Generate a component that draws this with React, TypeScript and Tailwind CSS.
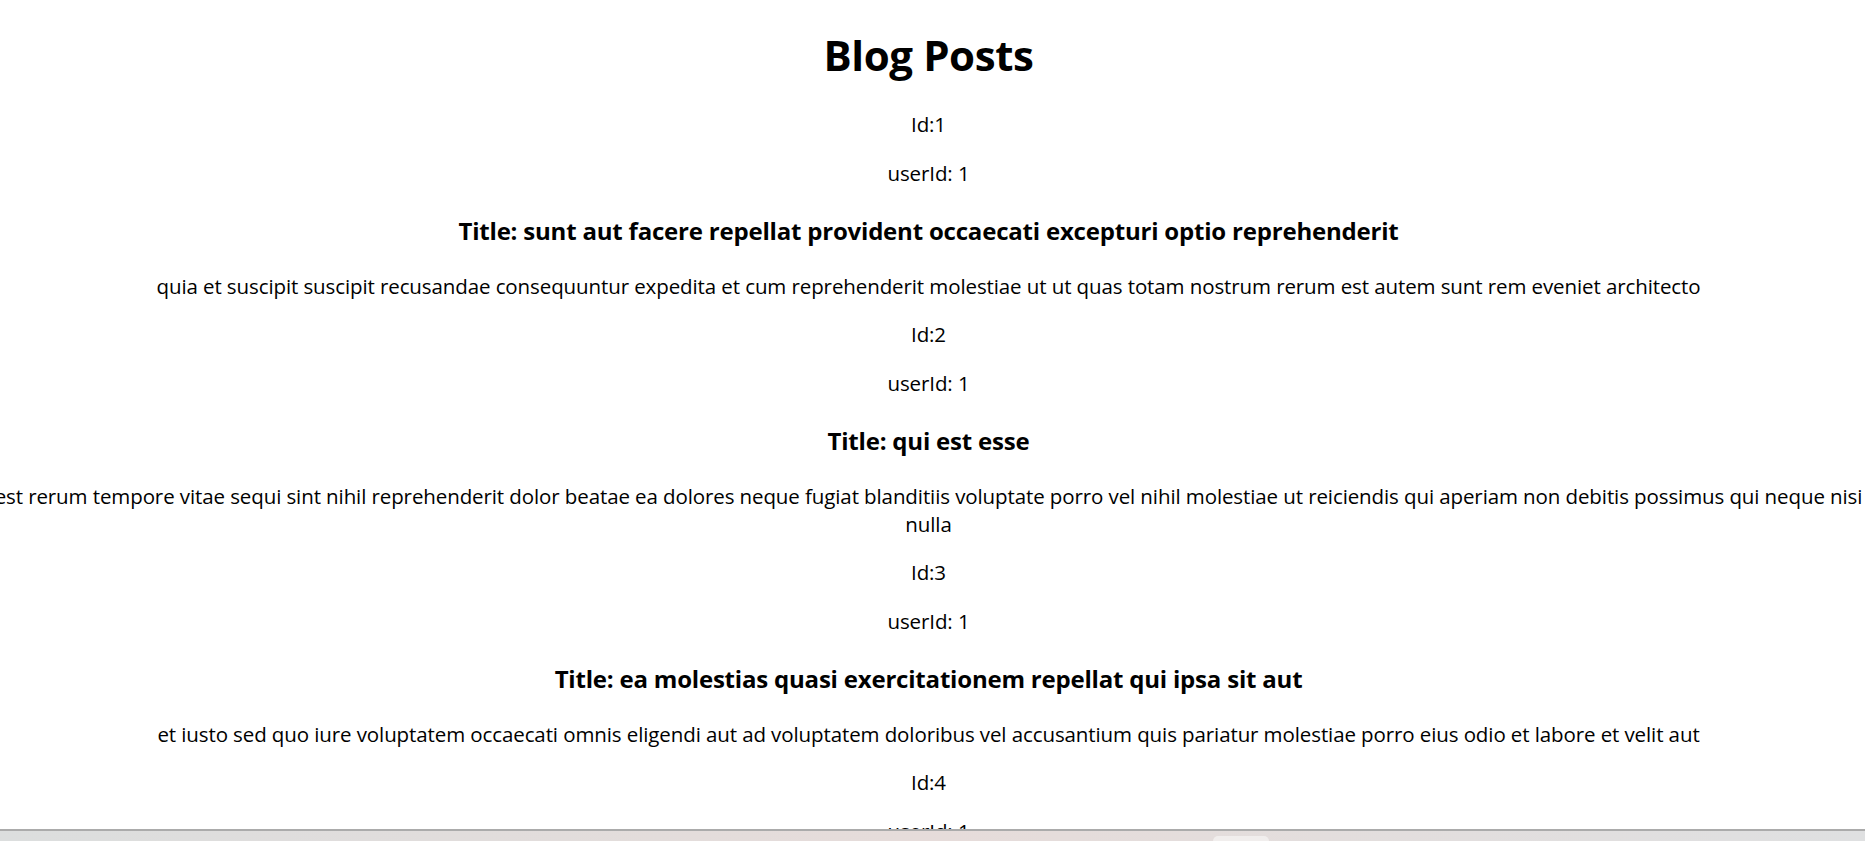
import React from 'react';

interface Post {
  id: number;
  userId: number;
  title: string;
  body: string;
}

const posts: Post[] = [
  {
    userId: 1,
    id: 1,
    title: 'sunt aut facere repellat provident occaecati excepturi optio reprehenderit',
    body: 'quia et suscipit suscipit recusandae consequuntur expedita et cum reprehenderit molestiae ut ut quas totam nostrum rerum est autem sunt rem eveniet architecto',
  },
  {
    userId: 1,
    id: 2,
    title: 'qui est esse',
    body: 'est rerum tempore vitae sequi sint nihil reprehenderit dolor beatae ea dolores neque fugiat blanditiis voluptate porro vel nihil molestiae ut reiciendis qui aperiam non debitis possimus qui neque nisi nulla',
  },
  {
    userId: 1,
    id: 3,
    title: 'ea molestias quasi exercitationem repellat qui ipsa sit aut',
    body: 'et iusto sed quo iure voluptatem occaecati omnis eligendi aut ad voluptatem doloribus vel accusantium quis pariatur molestiae porro eius odio et labore et velit aut',
  },
  {
    userId: 1,
    id: 4,
    title: 'eum et est occaecati',
    body: 'ullam et saepe reiciendis voluptatem adipisci sit amet autem assumenda provident rerum culpa quis hic commodi nesciunt rem tenetur doloremque ipsam iure quis sunt voluptatem rerum illo velit',
  },
  {
    userId: 1,
    id: 5,
    title: 'nesciunt quas odio',
    body: 'repudiandae veniam quaerat sunt sed alias aut fugiat sit autem sed est voluptatem omnis possimus esse voluptatibus quis est aut tenetur dolor neque',
  },
];

const PostItem: React.FC<{ post: Post }> = ({ post }) => (
  <div className="flex flex-col items-center">
    <p className="mb-[20px] text-[20.5px] leading-[29px] tracking-[-0.1px]">Id:{post.id}</p>
    <p className="mb-[26px] text-[20.5px] leading-[29px] tracking-[-0.1px]">userId: {post.userId}</p>
    <h3 className="mb-[24px] text-[24px] font-bold leading-[34px] tracking-[-0.2px]">Title: {post.title}</h3>
    <p className="w-[1900px] max-w-none shrink-0 text-[20.5px] leading-[28px] tracking-[-0.1px]">{post.body}</p>
  </div>
);

export default function App() {
  return (
    <div
      className="relative h-screen overflow-hidden bg-white text-black"
      style={{ fontFamily: '"Open Sans", "Noto Sans", sans-serif' }}
    >
      <div className="flex flex-col items-stretch pr-[8px] pt-[26px] text-center">
        <h1 className="mb-[26px] text-[42px] font-bold leading-[58px] tracking-[-0.4px]">Blog Posts</h1>
        <div className="flex flex-col gap-[20px]">
          {posts.map((post) => (
            <PostItem key={post.id} post={post} />
          ))}
        </div>
      </div>

      {/* taskbar strip at the bottom of the screen */}
      <div className="fixed inset-x-0 bottom-0 h-[12px] border-t-2 border-[#ababab] bg-gradient-to-r from-[#dcdede] via-[#e6dcda] to-[#dfe0e1]">
        <div className="absolute bottom-0 left-[1213px] h-[5px] w-[56px] rounded-t-[5px] bg-[#f1eeed]" />
      </div>
    </div>
  );
}
